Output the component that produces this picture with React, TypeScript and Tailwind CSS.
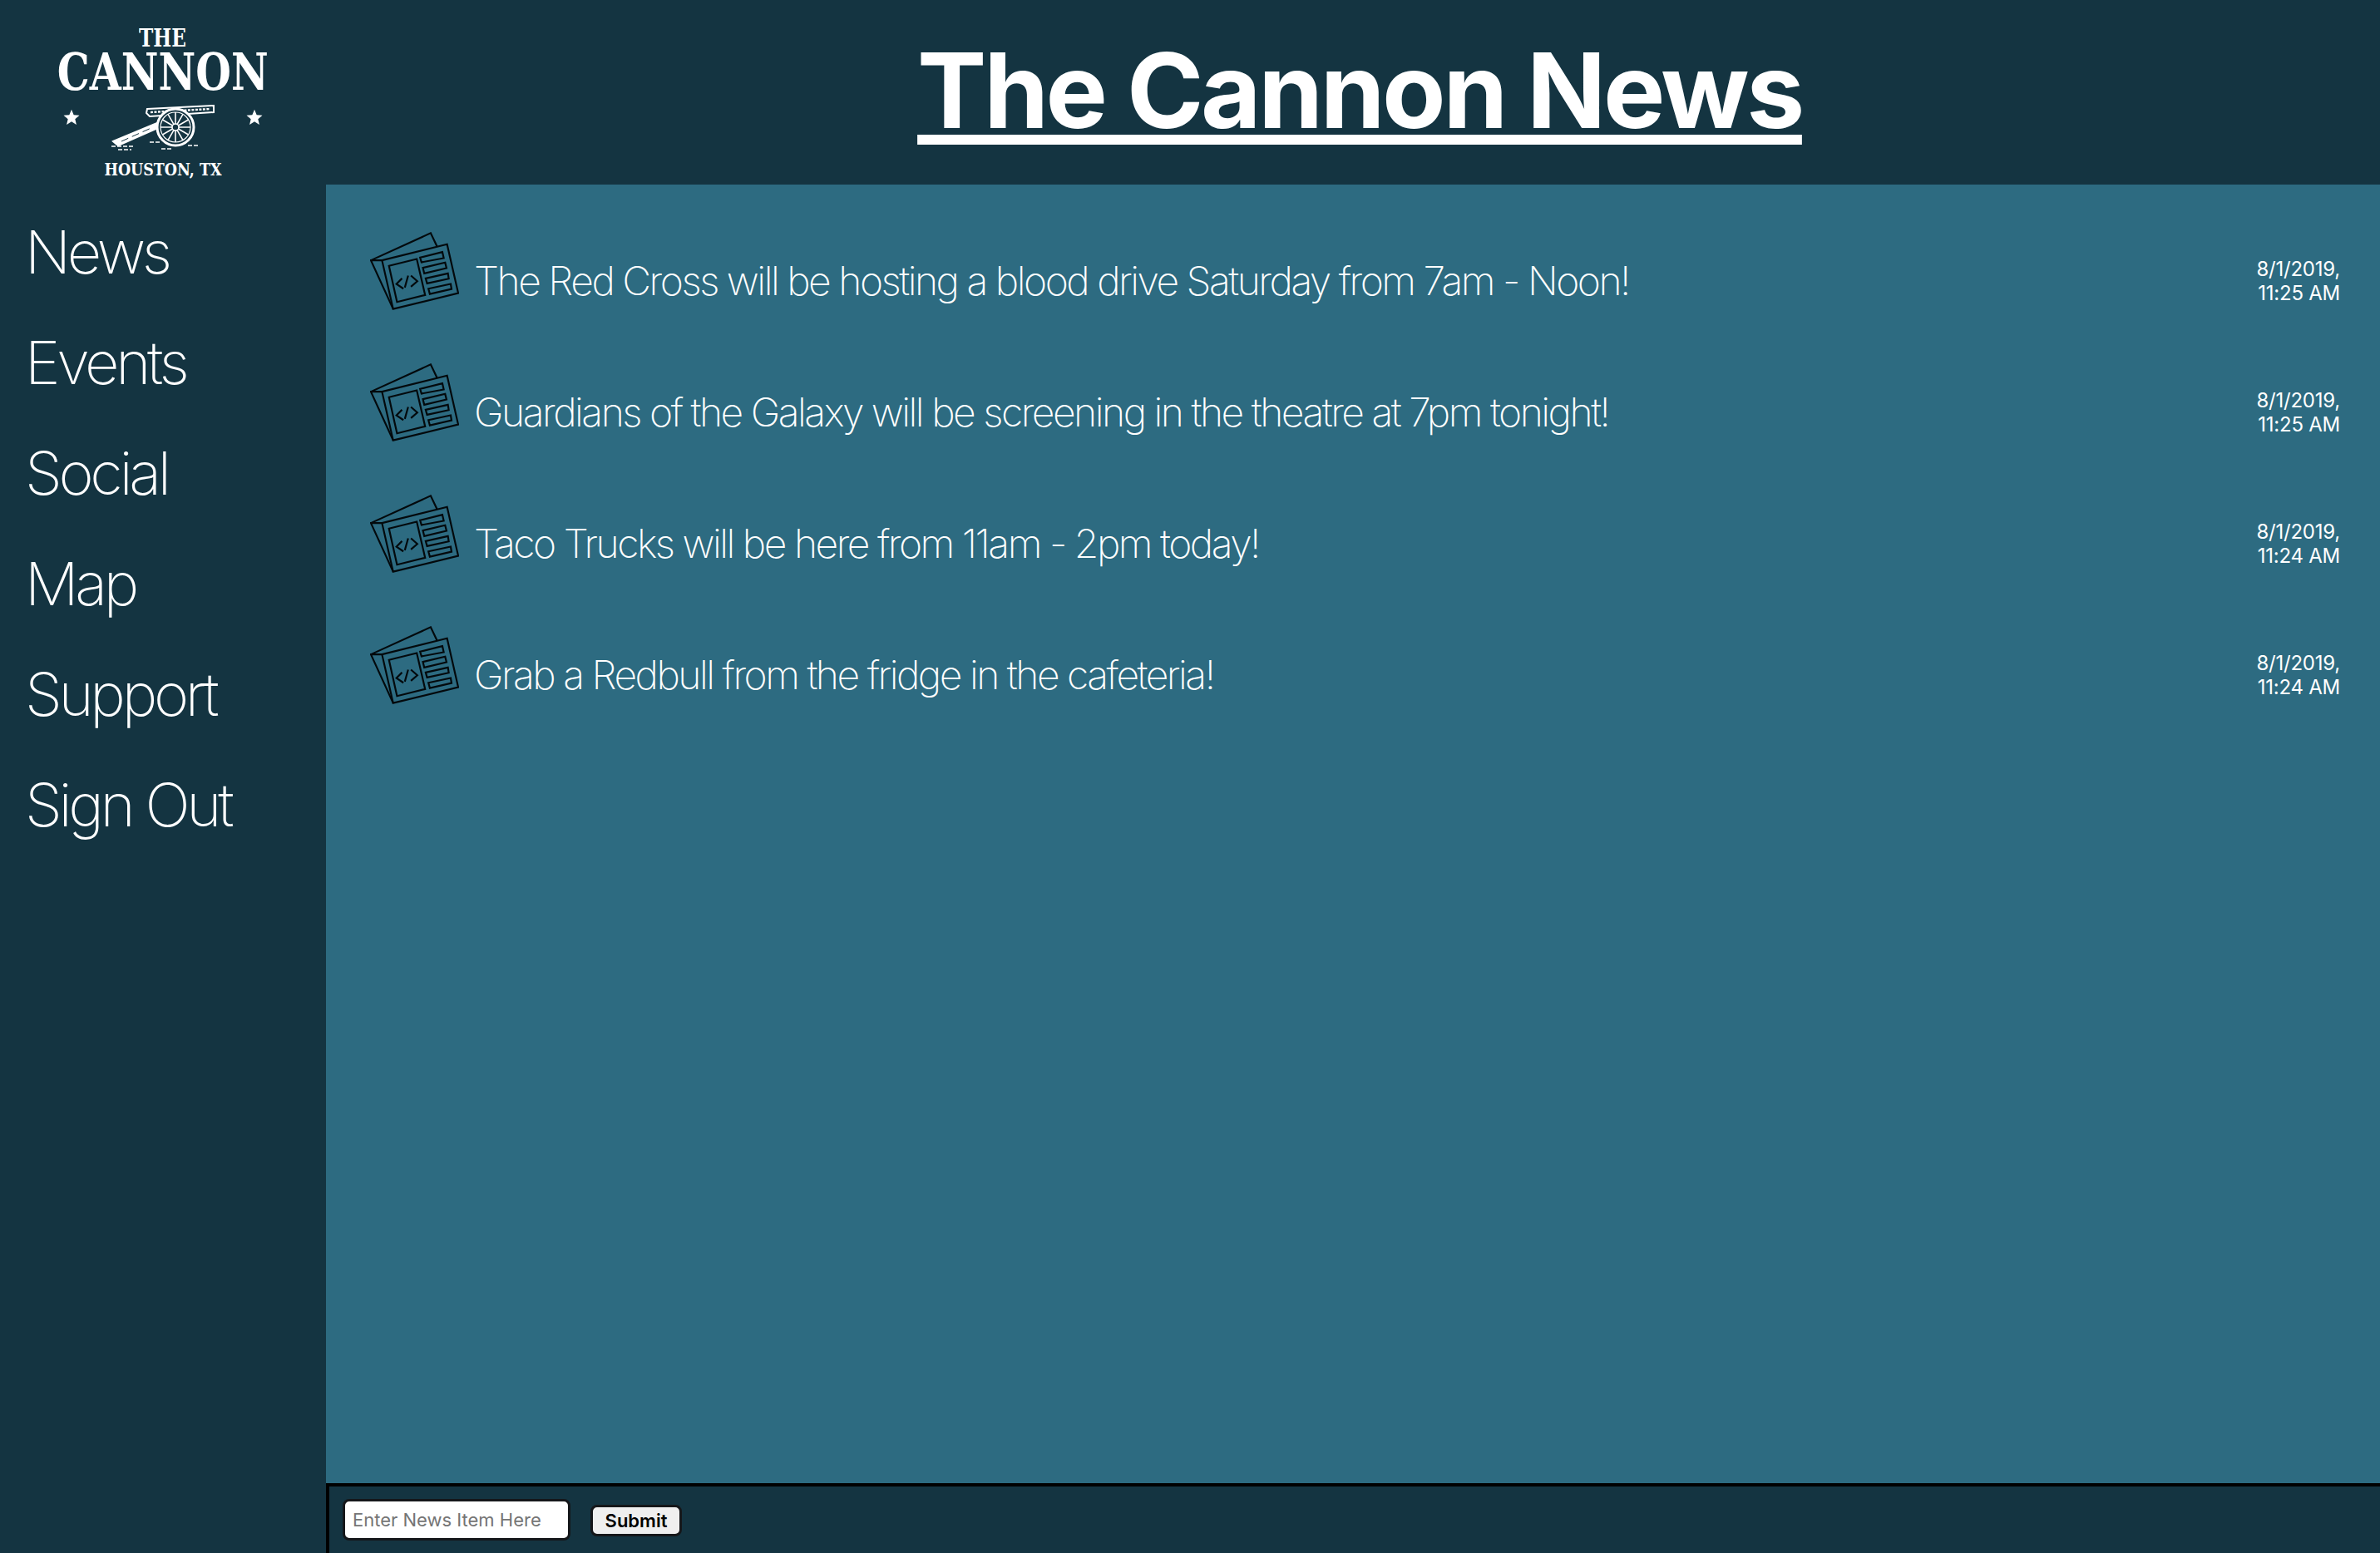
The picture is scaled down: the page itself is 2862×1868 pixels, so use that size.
const navItems = ['News', 'Events', 'Social', 'Map', 'Support', 'Sign Out']

const newsItems = [
  { text: 'The Red Cross will be hosting a blood drive Saturday from 7am - Noon!', date: '8/1/2019,', time: '11:25 AM' },
  { text: 'Guardians of the Galaxy will be screening in the theatre at 7pm tonight!', date: '8/1/2019,', time: '11:25 AM' },
  { text: 'Taco Trucks will be here from 11am - 2pm today!', date: '8/1/2019,', time: '11:24 AM' },
  { text: 'Grab a Redbull from the fridge in the cafeteria!', date: '8/1/2019,', time: '11:24 AM' },
]

function Star() {
  return (
    <svg width="20" height="20" viewBox="0 0 24 24" fill="#fff" className="mb-[26px]">
      <path d="M12 1l3.2 7.6 8.2.7-6.2 5.4 1.9 8L12 18.4l-7.1 4.3 1.9-8L.6 9.3l8.2-.7z" />
    </svg>
  )
}

function CannonDrawing() {
  const spokes = [0, 30, 60, 90, 120, 150]
  return (
    <svg width="124" height="56" viewBox="0 0 124 56" fill="none" stroke="#fff">
      <path d="M43 5 L123 1 L123 9 L46 14 L42 10 Z" strokeWidth="2" fill="#143441" />
      <path d="M47 9 L119 5" strokeWidth="2.4" strokeDasharray="3 1.5" />
      <path d="M2 44 L55 22 L56 28 L8 49 Z" strokeWidth="2" fill="#fff" />
      <path d="M12 44 L50 27" stroke="#143441" strokeWidth="1" strokeDasharray="9 5" />
      <circle cx="77" cy="27" r="22" strokeWidth="3" fill="#143441" />
      <circle cx="77" cy="27" r="18" strokeWidth="1.2" />
      {spokes.map((a) => (
        <path key={a} d="M77 9 V45" strokeWidth="1.6" transform={`rotate(${a} 77 27)`} />
      ))}
      <circle cx="77" cy="27" r="4" strokeWidth="1.6" fill="#143441" />
      <path d="M0 50 H28 M8 54 H24 M46 45 H58 M60 53 H72 M92 49 H106" strokeWidth="1.4" strokeDasharray="5 2" />
    </svg>
  )
}

function Logo() {
  return (
    <div className="h-[222px] flex flex-col items-center pt-[32px] font-['DejaVu_Serif',serif] font-bold text-white">
      <div className="text-[29px] h-[28px] leading-[28px] scale-x-[0.8]">THE</div>
      <div className="text-[62px] h-[48px] leading-[48px] mt-[3px] scale-x-[0.79] whitespace-nowrap">CANNON</div>
      <div className="flex items-center justify-between w-[240px] h-[56px] mt-[15px]">
        <Star />
        <CannonDrawing />
        <Star />
      </div>
      <div className="text-[20.5px] leading-[24px] mt-[10px] scale-x-[0.85] whitespace-nowrap">HOUSTON, TX</div>
    </div>
  )
}

function NewsIcon() {
  return (
    <svg width="107" height="95" viewBox="75 58 320 284" fill="none" stroke="#03090c" strokeWidth="6.5" className="shrink-0 mb-[24px]">
      <path d="M119 160 L78 160 L158 335 M78 160 L293 62 L316 110" />
      <path d="M118 160 L352 102 L392 278 L158 335 Z" />
      <path d="M143 180 L243 155 L273 285 L172 310 Z" />
      <path d="M255 150 L335 130 L340 152 L260 167 Z" />
      <path d="M265 187 L345 168 L350 188 L270 207 Z" />
      <path d="M275 225 L355 207 L358 226 L280 243 Z" />
      <path d="M285 262 L365 245 L368 263 L290 281 Z" />
      <path d="M190 225 L170 245 L195 262 M222 215 L245 235 L222 255 M212 215 L200 258" />
    </svg>
  )
}

function NewsRow(props: { text: string; date: string; time: string }) {
  return (
    <div className="h-[158px] flex items-center pl-[53px] pr-[48px]">
      <NewsIcon />
      <p className="ml-[18px] flex-1 text-[48px] font-extralight text-white tracking-[-0.052em] whitespace-nowrap">
        {props.text}
      </p>
      <div className="text-[24px] leading-[29px] font-normal text-white text-right w-[110px] tracking-[-0.01em]">
        <div>{props.date}</div>
        <div>{props.time}</div>
      </div>
    </div>
  )
}

export default function App() {
  return (
    <div className="w-[2862px] h-[1868px] flex bg-[#143441] font-['Inter',sans-serif] overflow-hidden">
      {/* Sidebar */}
      <aside className="w-[392px] shrink-0">
        <Logo />
        <nav className="flex flex-col pl-[30px] pt-[14px]">
          {navItems.map((item) => (
            <a key={item} className="h-[133px] text-[72px] leading-[133px] font-extralight text-white tracking-[-0.06em]">
              {item}
            </a>
          ))}
        </nav>
      </aside>

      <div className="flex-1 flex flex-col">
        <header className="h-[222px] flex items-center justify-center pl-[16px] pb-[6px]">
          <h1 className="text-[125px] leading-none font-bold text-white underline decoration-[12px] underline-offset-[8px] [text-decoration-skip-ink:none] tracking-[-0.027em]">
            The Cannon News
          </h1>
        </header>

        <main className="flex-1 bg-[#2d6b81] pt-[37px]">
          {newsItems.map((item) => (
            <NewsRow key={item.text} {...item} />
          ))}
        </main>

        {/* News input */}
        <footer className="h-[84px] border-t-4 border-l-4 border-black flex items-center pl-[16px] gap-[24px]">
          <input
            placeholder="Enter News Item Here"
            className="w-[274px] h-[50px] bg-white border-[3px] border-[#15171a] rounded-[8px] px-[9px] text-[22px] text-black placeholder:text-[#757575] outline-none"
          />
          <button className="w-[110px] h-[38px] mt-[2px] bg-[#efefef] border-[3px] border-[#15171a] rounded-[8px] text-[22px] leading-none font-semibold text-black">
            Submit
          </button>
        </footer>
      </div>
    </div>
  )
}
